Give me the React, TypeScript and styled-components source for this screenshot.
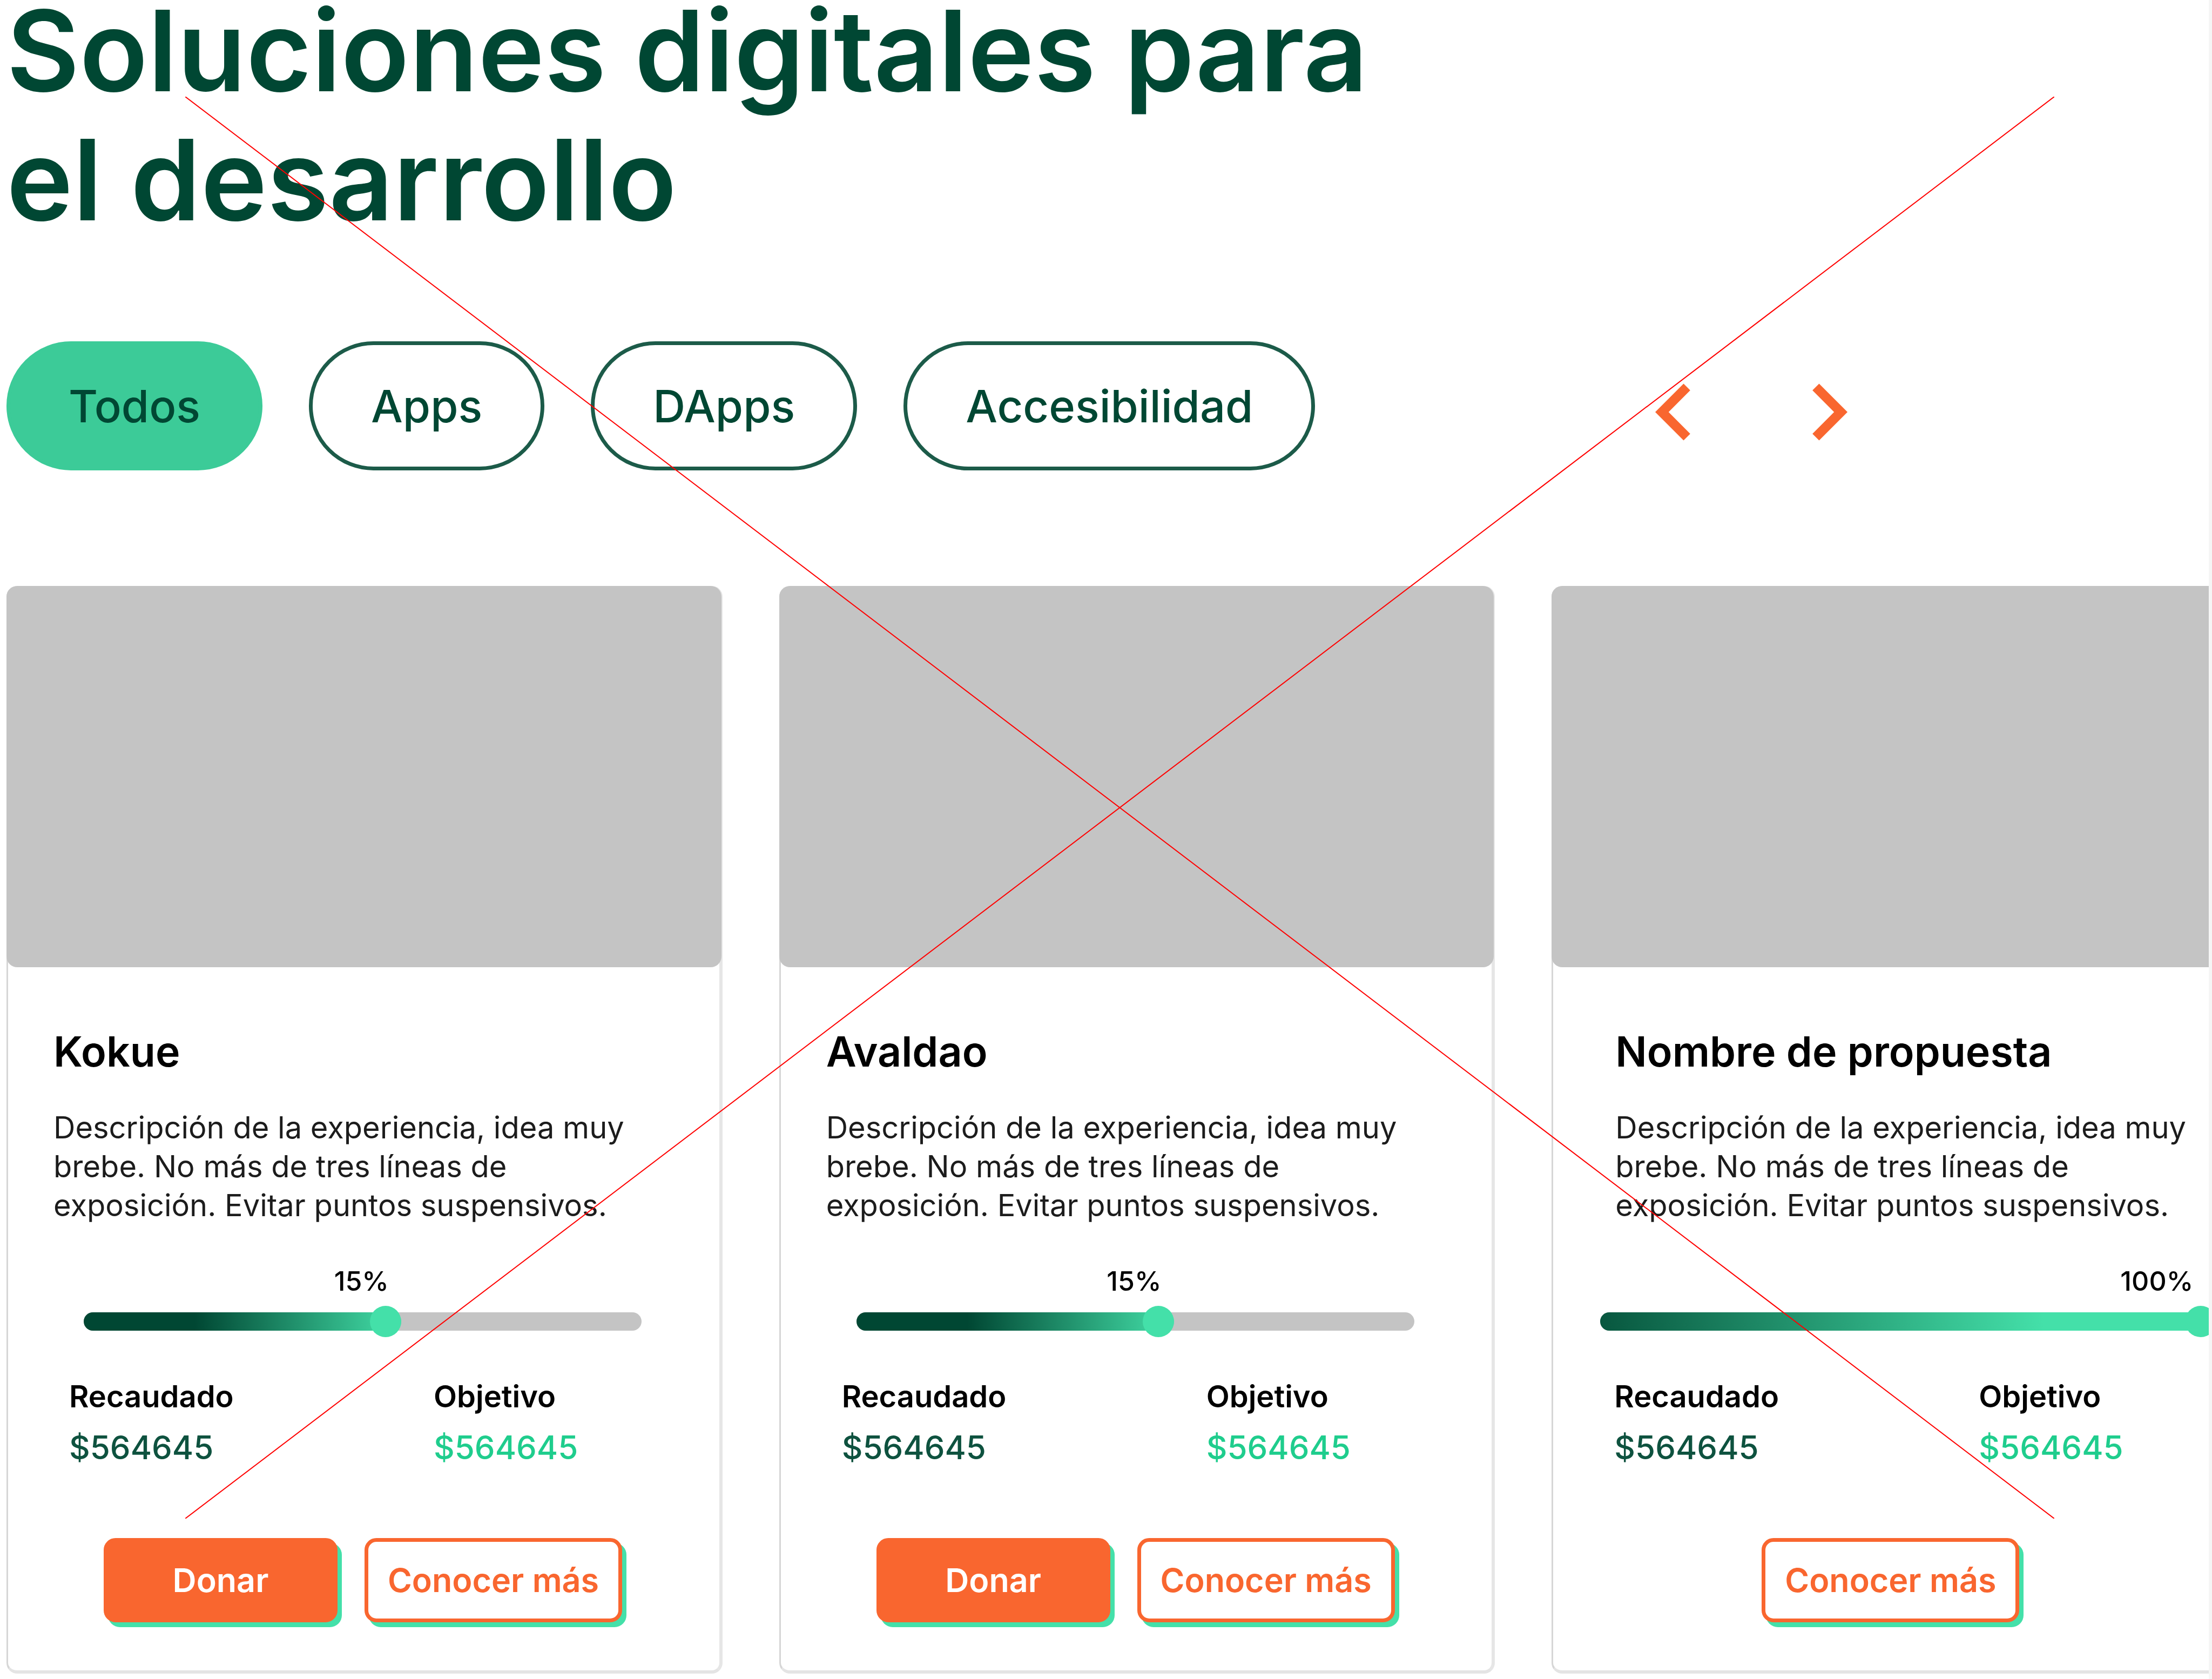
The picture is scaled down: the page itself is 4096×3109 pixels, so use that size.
import React, { useState } from "react";
import styled, { createGlobalStyle } from "styled-components";

const INK = "#004733";
const MINT = "#44e0a9";
const ORANGE = "#f9662f";
const GREY = "#c4c4c4";

const GlobalStyle = createGlobalStyle`
  *, *::before, *::after { box-sizing: border-box; }
  body { margin: 0; background: #fff; font-family: Inter, "Noto Sans", sans-serif; }
  h1, h2, p, dl, dd, dt { margin: 0; }
  button { font-family: inherit; cursor: pointer; }
`;

const Page = styled.main`
  display: flow-root;
  position: relative;
  overflow-x: clip;
  padding: 0 0 10px 12px;
  border-right: 6px solid #f5f5f5;
`;

const Title = styled.h1`
  max-width: 2700px;
  margin: -26px 0 180px;
  color: ${INK};
  font-size: 208px;
  font-weight: 600;
  line-height: 239px;
`;

const Toolbar = styled.div`
  display: flex;
  align-items: flex-end;
  gap: 560px;
`;

const Filters = styled.div`
  display: flex;
  gap: 86px;
`;

const Pill = styled.button<{ $active: boolean }>`
  height: 239px;
  padding: 0 108px;
  border: 7px solid ${(p) => (p.$active ? "#3ccb98" : "#1c5b49")};
  border-radius: 120px;
  background: ${(p) => (p.$active ? "#3ccb98" : "#fff")};
  color: ${INK};
  font-size: 83px;
  font-weight: 500;
  line-height: 120px;
`;

const Arrows = styled.div`
  display: flex;
  gap: 76px;
`;

const ArrowButton = styled.button`
  display: flex;
  padding: 3px 0;
  border: 0;
  background: none;
  color: ${ORANGE};
  svg { width: 210px; height: 210px; fill: currentColor; }
`;

const Cards = styled.section`
  display: grid;
  grid-template-columns: repeat(3, 1fr);
  gap: 105px;
  margin: 214px -109px 0 0;
`;

const Card = styled.article`
  display: flex;
  flex-direction: column;
  border-style: solid;
  border-width: 4px 6px 6px 3px;
  border-color: #e4e4e4 #e6e6e6 #e4e4e4 #d6d6d6;
  border-radius: 20px;
  background: #fff;
`;

const Cover = styled.div`
  height: 706px;
  margin: -4px -4px 0 -3px;
  border-radius: 20px;
  background: ${GREY};
`;

const Copy = styled.div<{ $inset: number }>`
  display: grid;
  gap: 51px;
  padding: 102px 0 0 ${(p) => p.$inset}px;
`;

const CardTitle = styled.h2`
  color: #000;
  font-size: 77px;
  font-weight: 600;
  line-height: 108px;
`;

const Description = styled.p`
  width: 1150px;
  color: #1c1c1c;
  font-size: 56px;
  line-height: 72px;
`;

const Progress = styled.div<{ $start: number; $length: number }>`
  width: ${(p) => p.$length}px;
  margin: 68px 0 0 ${(p) => p.$start}px;
`;

const Percent = styled.div<{ $end: number }>`
  width: ${(p) => p.$end}px;
  color: #000;
  font-size: 50px;
  font-weight: 500;
  line-height: 72px;
  text-align: right;
`;

const Track = styled.div`
  display: flex;
  align-items: center;
  height: 34px;
  margin-top: 22px;
  border-radius: 17px;
  background: ${GREY};
`;

const Fill = styled.div<{ $length: number; $gradient: string }>`
  display: flex;
  align-items: center;
  justify-content: flex-end;
  width: ${(p) => p.$length}px;
  height: 34px;
  border-radius: 17px;
  background: linear-gradient(90deg, ${(p) => p.$gradient});
`;

const Knob = styled.span`
  flex: none;
  width: 58px;
  height: 58px;
  border-radius: 50%;
  background: ${MINT};
`;

const Stats = styled.dl`
  display: grid;
  grid-template-columns: 675px 1fr;
  padding: 82px 0 0 113px;
`;

const StatLabel = styled.dt`
  color: #000;
  font-size: 56px;
  font-weight: 600;
  line-height: 80px;
`;

const StatValue = styled.dd<{ $goal?: boolean }>`
  padding-top: 12px;
  color: ${(p) => (p.$goal ? "#1fcd8d" : "#0e523f")};
  font-size: 60px;
  font-weight: 500;
  line-height: 84px;
`;

const Actions = styled.div<{ $inset: number }>`
  display: flex;
  gap: 50px;
  padding: 126px 0 89px ${(p) => p.$inset}px;
`;

const Action = styled.button<{ $primary?: boolean }>`
  width: ${(p) => (p.$primary ? 433 : 477)}px;
  height: 156px;
  padding: 0;
  border: 7px solid ${ORANGE};
  border-radius: 22px;
  background: ${(p) => (p.$primary ? ORANGE : "#fff")};
  box-shadow: 8px 9px 0 ${MINT};
  color: ${(p) => (p.$primary ? "#fff" : ORANGE)};
  font-size: 61px;
  font-weight: 600;
  line-height: 84px;
`;

const CrossLines = styled.svg`
  position: absolute;
  top: 179px;
  left: 343px;
  width: calc(100% - 629px);
  height: calc(100% - 476px);
  pointer-events: none;
  line { stroke: #f00; stroke-width: 2px; vector-effect: non-scaling-stroke; }
`;

const filters = ["Todos", "Apps", "DApps", "Accesibilidad"];

const DESCRIPTION = [
  "Descripción de la experiencia, idea muy",
  "brebe. No más de tres líneas de",
  "exposición. Evitar puntos suspensivos.",
];

const HALF = `${INK} 0%, ${INK} 35%, ${MINT} 100%`;
const FULL = `#08573f 0%, ${MINT} 72%`;

const proposals = [
  { name: "Kokue", percent: "15%", copy: 84, start: 140, length: 1033, fill: 588, label: 565, gradient: HALF, actions: 177, donate: true },
  { name: "Avaldao", percent: "15%", copy: 84, start: 140, length: 1033, fill: 588, label: 565, gradient: HALF, actions: 177, donate: true },
  { name: "Nombre de propuesta", percent: "100%", copy: 115, start: 87, length: 1141, fill: 1141, label: 1098, gradient: FULL, actions: 386, donate: false },
];

export default function App() {
  const [active, setActive] = useState("Todos");
  return (
    <>
      <GlobalStyle />
      <Page>
        <Title>
          Soluciones digitales para
          <br />
          el desarrollo
        </Title>
        <Toolbar>
          <Filters>
            {filters.map((f) => (
              <Pill key={f} $active={f === active} aria-pressed={f === active} onClick={() => setActive(f)}>
                {f}
              </Pill>
            ))}
          </Filters>
          <Arrows>
            <ArrowButton aria-label="Anterior">
              <svg viewBox="0 0 24 24"><path d="M15.41 7.41 14 6l-6 6 6 6 1.41-1.41L10.83 12z" /></svg>
            </ArrowButton>
            <ArrowButton aria-label="Siguiente">
              <svg viewBox="0 0 24 24"><path d="M10 6 8.59 7.41 13.17 12l-4.58 4.59L10 18l6-6z" /></svg>
            </ArrowButton>
          </Arrows>
        </Toolbar>
        <Cards>
          {proposals.map((p) => (
            <Card key={p.name}>
              <Cover />
              <Copy $inset={p.copy}>
                <CardTitle>{p.name}</CardTitle>
                <Description>
                  {DESCRIPTION.map((line, i) => (
                    <React.Fragment key={line}>
                      {i > 0 && <br />}
                      {line}
                    </React.Fragment>
                  ))}
                </Description>
              </Copy>
              <Progress $start={p.start} $length={p.length}>
                <Percent $end={p.label}>{p.percent}</Percent>
                <Track>
                  <Fill $length={p.fill} $gradient={p.gradient}>
                    <Knob />
                  </Fill>
                </Track>
              </Progress>
              <Stats>
                <div>
                  <StatLabel>Recaudado</StatLabel>
                  <StatValue>$564645</StatValue>
                </div>
                <div>
                  <StatLabel>Objetivo</StatLabel>
                  <StatValue $goal>$564645</StatValue>
                </div>
              </Stats>
              <Actions $inset={p.actions}>
                {p.donate && <Action $primary>Donar</Action>}
                <Action>Conocer más</Action>
              </Actions>
            </Card>
          ))}
        </Cards>
        <CrossLines viewBox="0 0 100 100" preserveAspectRatio="none" aria-hidden="true">
          <line x1="0" y1="0" x2="100" y2="100" />
          <line x1="100" y1="0" x2="0" y2="100" />
        </CrossLines>
      </Page>
    </>
  );
}
